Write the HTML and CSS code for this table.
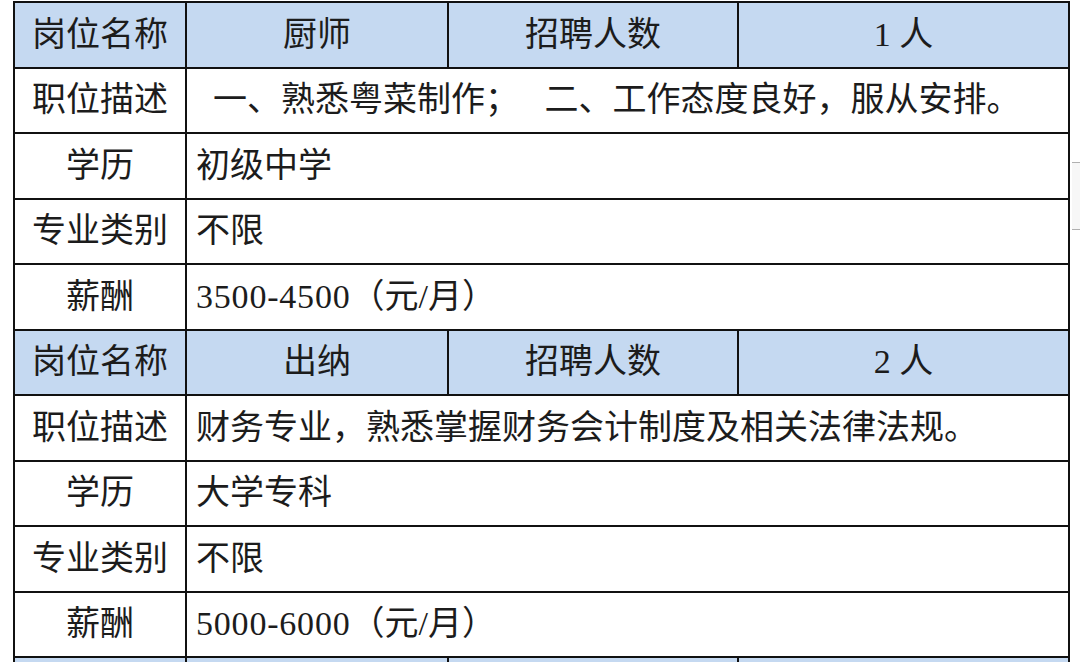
FILE: index.html
```html
<!DOCTYPE html>
<html lang="zh-CN">
<head>
<meta charset="utf-8">
<title>招聘岗位</title>
<link rel="stylesheet" href="styles.css">
</head>
<body>
<div class="sheet">
  <div class="cell head">岗位名称</div>
  <div class="cell head">厨师</div>
  <div class="cell head">招聘人数</div>
  <div class="cell head">1 人</div>

  <div class="cell label">职位描述</div>
  <div class="cell value wide indent">一、熟悉粤菜制作；   二、工作态度良好，服从安排。</div>

  <div class="cell label">学历</div>
  <div class="cell value wide">初级中学</div>

  <div class="cell label">专业类别</div>
  <div class="cell value wide">不限</div>

  <div class="cell label">薪酬</div>
  <div class="cell value wide"><span class="num">3500-4500</span>（元/月）</div>

  <div class="cell head">岗位名称</div>
  <div class="cell head">出纳</div>
  <div class="cell head">招聘人数</div>
  <div class="cell head">2 人</div>

  <div class="cell label">职位描述</div>
  <div class="cell value wide">财务专业，熟悉掌握财务会计制度及相关法律法规。</div>

  <div class="cell label">学历</div>
  <div class="cell value wide">大学专科</div>

  <div class="cell label">专业类别</div>
  <div class="cell value wide">不限</div>

  <div class="cell label">薪酬</div>
  <div class="cell value wide"><span class="num">5000-6000</span>（元/月）</div>

  <div class="cell head"></div>
  <div class="cell head"></div>
  <div class="cell head"></div>
  <div class="cell head"></div>
</div>
<div class="side-tab"></div>
</body>
</html>
```

FILE: styles.css
```css
html, body {
  margin: 0;
  padding: 0;
  background: #ffffff;
  overflow: hidden;
  height: 662px;
}

body {
  font-family: "Liberation Serif", "Noto Sans CJK SC", sans-serif;
  font-size: 34px;
  color: #1c1c1c;
  text-spacing-trim: space-all;
}

.sheet {
  display: grid;
  grid-template-columns: 170px 260px 288px 329px;
  grid-template-rows: repeat(10, 63.5px) 4px;
  gap: 2px;
  padding: 2px 2px 0 2px;
  background: #111111;
  width: max-content;
  margin: 1px 0 0 13px;
}

.cell {
  display: flex;
  align-items: center;
  white-space: nowrap;
  background: #ffffff;
  line-height: 1;
  overflow: hidden;
}

.head {
  background: #c5d9f1;
  justify-content: center;
}

.label {
  justify-content: center;
}

.value {
  padding-left: 9px;
}

.wide {
  grid-column: span 3;
}

.indent {
  padding-left: 26px;
  white-space: pre;
}

.num {
  letter-spacing: 0.8px;
}

.side-tab {
  position: absolute;
  left: 1072px;
  top: 162px;
  width: 8px;
  height: 66px;
  background: #f7f7f7;
  border-top: 1px solid #b0b0b0;
  border-bottom: 1px solid #b0b0b0;
}
```
